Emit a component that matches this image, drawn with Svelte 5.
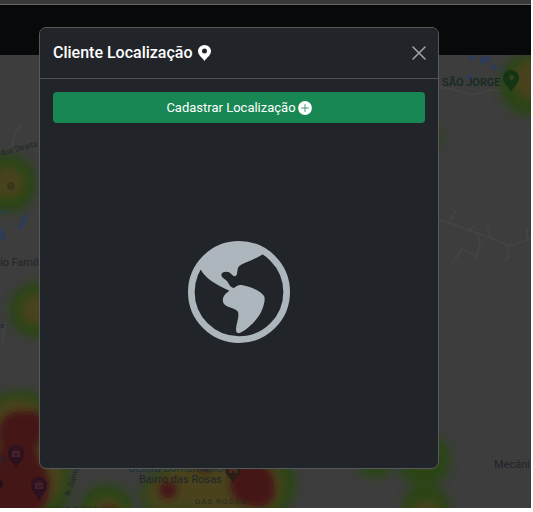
<script>
  const green = [
    [8, 183, 29], [37, 310, 28], [530, 85, 31], [427, 138, 14], [20, 428, 38], [10, 480, 62],
    [36, 478, 36], [107, 511, 27], [165, 495, 24], [195, 485, 34], [235, 488, 44], [262, 484, 34],
    [375, 458, 20], [424, 460, 27], [426, 508, 24], [48, 440, 34]
  ];
  const yellow = [
    [8, 183, 16], [37, 310, 16], [534, 80, 21], [18, 430, 32], [8, 470, 45], [32, 478, 31],
    [107, 514, 17], [165, 494, 18], [195, 480, 30], [230, 492, 36], [255, 486, 28],
    [424, 460, 8], [426, 514, 14]
  ];
  const red = [
    [20, 433, 22], [17, 461, 22], [16, 486, 34], [30, 425, 14], [109, 518, 11],
    [168, 490, 9], [205, 463, 9], [252, 484, 22], [258, 490, 17], [245, 468, 14]
  ];
  const shops = [[16, 453], [39, 485]];
</script>

<main class="page">
  <div class="browser-edge"></div>
  <nav class="navbar" aria-label="Principal"></nav>
  <section class="map" aria-label="Mapa">
    <svg viewBox="0 55 531 453" preserveAspectRatio="xMinYMin slice">
      <defs>
        <filter id="soft" x="-30%" y="-30%" width="160%" height="160%"><feGaussianBlur stdDeviation="5" /></filter>
        <filter id="core" x="-30%" y="-30%" width="160%" height="160%"><feGaussianBlur stdDeviation="3" /></filter>
      </defs>
      <rect y="55" width="531" height="453" fill="#3d3d3d" />
      <g fill="none" stroke="#434343" stroke-width="2">
        <path d="M439 87l16 3 17 5 20-5 22 1M439 220l14 4 17 7 16 5 23 10 22-7M450 221l6-11M469 231l7-7M490 238l-3-12M507 246l2 9-4 7M478 234l2 12-4 11-14-8-10 15M527 240v-12" />
        <path d="M12 146l4-16 5-4M32 193l8 8M2 344l3-22" />
      </g>
      <g stroke="#2c3c5a" fill="none" stroke-width="4">
        <path d="M0 210l7 3M0 229l4 11M26 215l-3 8-4 6M470 55l4 5M481 57l2 5 7-5M491 66l5 2M500 68l8 5M467 76l5 3" />
      </g>
      <g fill="#2b4415" filter="url(#soft)">
        {#each green as [x, y, r]}<circle cx={x} cy={y} {r} />{/each}
      </g>
      <g fill="#4a431a" filter="url(#soft)">
        {#each yellow as [x, y, r]}<circle cx={x} cy={y} {r} />{/each}
      </g>
      <g fill="#451719" filter="url(#core)">
        {#each red as [x, y, r]}<circle cx={x} cy={y} {r} />{/each}
      </g>
      <circle cx="11" cy="186" r="4" fill="#383819" />
      <g class="labels">
        <text class="street" x="1" y="156" transform="rotate(-15 1 156)">dos Direita</text>
        <text class="place" x="0" y="266">io Famíl</text>
        <text class="street" x="0" y="328">s</text>
        <text class="place" x="0" y="462">a</text>
        <text class="street" x="70" y="496" transform="rotate(-72 70 496)">R. Santa</text>
        <text class="district" x="50" y="511">VILA NOVA</text>
        <text class="place centre" x="128" y="472">Centro Comunitário</text>
        <text class="place" x="139" y="483">Bairro das Rosas</text>
        <text class="district" x="195" y="504">DAS ROSAS</text>
        <text class="place" x="494" y="468">Mecâni</text>
        <text class="saint" x="442" y="86">SÃO JORGE</text>
      </g>
      <path fill="#143514" fill-rule="evenodd" d="M511 93c-2-7-8-9-8-15a8 8 0 0 1 16 0c0 6-6 8-8 15zM511.500 75a2.500 2.500 0 1 0 .1 5 2.500 2.500 0 0 0-.1-5z" />
      {#each shops as [x, y]}
        <g transform="translate({x} {y})">
          <path fill="#2b121e" d="M0 16c-2-7-8-8-8-16a8 8 0 0 1 16 0c0 8-6 9-8 16z" />
          <path fill="#47202a" d="M-4-2h8v6h-8z" />
          <path fill="none" stroke="#47202a" d="M-2-2a2 2 0 0 1 4 0" />
          <path fill="none" stroke="#2b121e" d="M-2 0a2 2 0 0 0 4 0" />
        </g>
      {/each}
      <path fill="#2b1d18" d="M233 484c-2-7-8-8-8-15h16c0 7-6 8-8 15z" />
      <path fill="#482a1c" d="M229 469h8v4h-3v-2h-2v2h-3z" />
      <circle cx="-2" cy="484" r="5" fill="#281018" />
    </svg>
  </section>

  <div class="backdrop">
    <div class="modal" role="dialog" aria-labelledby="modal-title">
      <header>
        <h1 id="modal-title">
          Cliente Localização
          <svg class="pin" viewBox="0 0 13 16" aria-hidden="true"><path fill="#fff" fill-rule="evenodd" d="M6.500 16C4.500 12.500 0 10.500 0 6.200a6.500 6.200 0 0 1 13 0c0 4.300-4.500 6.300-6.500 9.800zM6.500 3.500a2.500 2.500 0 1 0 0 5 2.500 2.500 0 0 0 0-5z" /></svg>
        </h1>
        <button class="close" type="button" aria-label="Fechar">
          <svg viewBox="0 0 14 14" aria-hidden="true"><path d="M1 1l12 12M13 1L1 13" stroke="#a3a5a7" stroke-width="1.500" stroke-linecap="round" /></svg>
        </button>
      </header>
      <div class="body">
        <button class="add" type="button">
          Cadastrar Localização
          <svg viewBox="0 0 14 14" aria-hidden="true"><circle cx="7" cy="7" r="6.900" fill="#fff" /><path d="M7 3.500v7M3.500 7h7" stroke="#198754" stroke-width=".8" stroke-linecap="round" /></svg>
        </button>
        <div class="empty">
          <svg viewBox="24 33 306 306" aria-hidden="true">
            <circle cx="177" cy="186" r="143" fill="none" stroke="#adb5bd" stroke-width="20" />
            <path fill="#adb5bd" d="M62 118C74 145 110 165 148 182L137 191C127 201 126 214 133 223C142 234 169 235 174 246C179 262 168 282 168 299C168 309 175 312 184 307C210 292 232 268 243 247C252 228 257 206 252 198C241 181 207 169 185 165C174 163 169 170 160 174C151 171 148 165 143 156C138 147 126 146 124 135C125 126 137 123 147 127C155 131 157 139 165 139C175 136 170 116 176 110C187 99 222 90 246 74L251 70C218 39 151 33 105 59C80 74 60 94 53 118Z" />
          </svg>
        </div>
      </div>
    </div>
  </div>
</main>

<style>
  :global(body) { margin: 0; background: #fff; }
  .page {
    position: relative;
    display: flex;
    flex-direction: column;
    box-sizing: border-box;
    height: 100vh;
    padding: 0 2px 4px 0;
    overflow: hidden;
    font-family: Roboto, "Liberation Sans", sans-serif;
  }
  .browser-edge { height: 4px; background: #393939; border-bottom: 1px solid #666; }
  .navbar { height: 50px; background: #08090b; }
  .map { flex: 1; min-height: 0; overflow: hidden; background: #3d3d3d; }
  .map svg { display: block; width: 100%; height: 100%; }
  .labels { fill: #20242a; font-size: 11px; }
  .labels .street { font-size: 8px; }
  .labels .district { font-size: 8px; fill: #2a2a1c; letter-spacing: 1px; }
  .labels .centre { fill: #173036; }
  .labels .saint { fill: #142a1d; font-weight: 500; }
  .backdrop {
    position: absolute;
    inset: 0;
    box-sizing: border-box;
    padding: 27px 94px 43px 39px;
    display: flex;
  }
  .modal {
    flex: 1;
    display: flex;
    flex-direction: column;
    background: #212529;
    background-clip: padding-box;
    border: 1px solid #56585a;
    border-radius: 7px;
    color: #fff;
  }
  header {
    display: flex;
    align-items: center;
    justify-content: space-between;
    height: 50px;
    padding: 0 12px 0 13px;
    border-bottom: 1px solid #4d5154;
  }
  h1 {
    display: flex;
    align-items: center;
    gap: 5px;
    margin: 0;
    font-size: 16px;
    line-height: 24px;
    font-weight: 500;
  }
  .pin { width: 13px; height: 16px; }
  .close {
    display: flex;
    padding: 0;
    border: 0;
    background: none;
    cursor: pointer;
  }
  .close svg { width: 14px; height: 14px; }
  .body { flex: 1; display: flex; flex-direction: column; padding: 13px; }
  .add {
    display: flex;
    align-items: center;
    justify-content: center;
    gap: 2px;
    height: 31px;
    padding: 0;
    border: 0;
    border-radius: 4px;
    background: #198754;
    color: #fff;
    font: 400 13px/20px Roboto, "Liberation Sans", sans-serif;
    cursor: pointer;
  }
  .add svg { width: 14px; height: 14px; }
  .empty { flex: 1; display: flex; align-items: center; justify-content: center; padding-top: 6px; }
  .empty svg { width: 102px; height: 102px; }
</style>
